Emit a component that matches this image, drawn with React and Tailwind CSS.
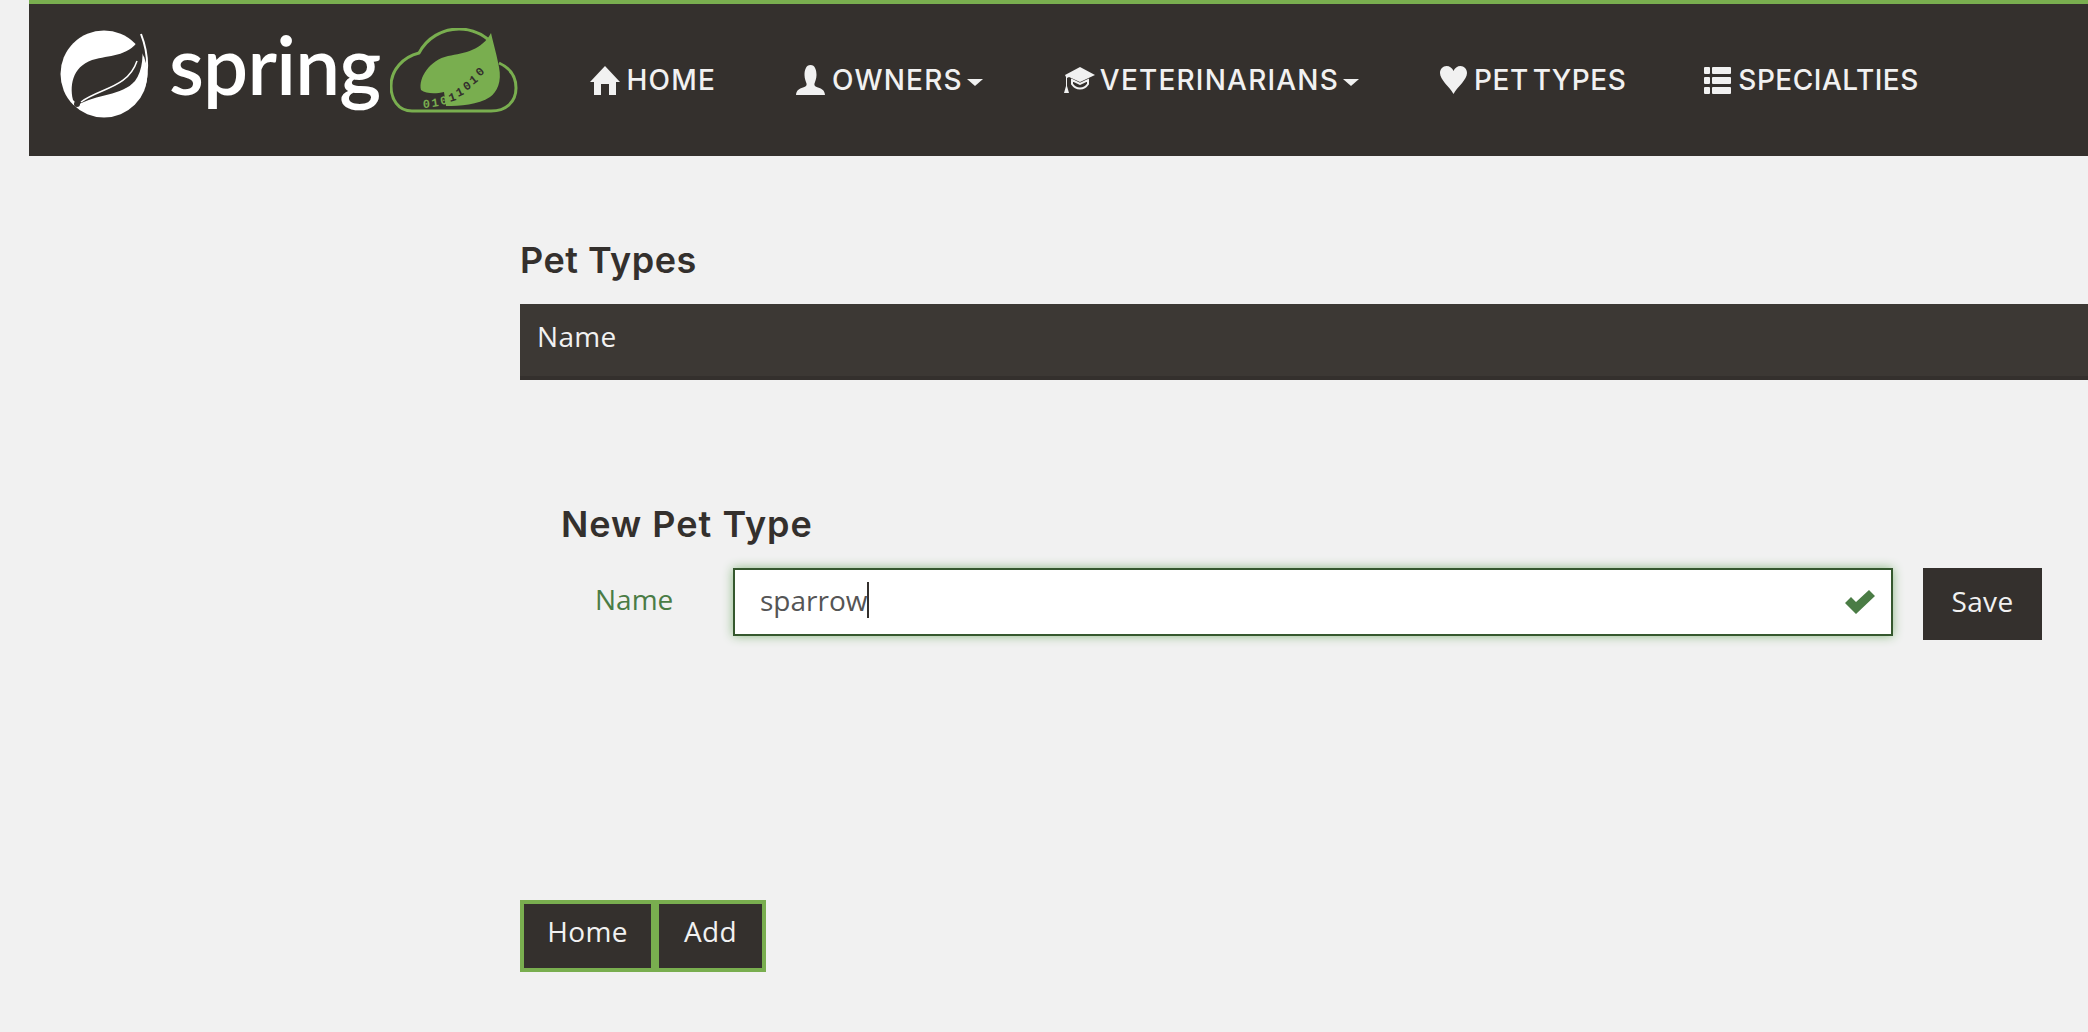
const heading = { fontFamily: '"Inter", "Liberation Sans", sans-serif' };
const body = { fontFamily: '"Open Sans", "Noto Sans", sans-serif' };

const digits = [
  ["0", 33, 80, -3, "#79ae4f"],
  ["1", 42, 79, -8, "#79ae4f"],
  ["0", 51, 77, -12, "#79ae4f"],
  ["1", 60, 74, -18, "#34302d"],
  ["1", 68, 69, -25, "#34302d"],
  ["0", 76, 63, -32, "#34302d"],
  ["1", 83, 57, -38, "#34302d"],
  ["0", 90, 49, -44, "#34302d"],
];

function SpringLeaf() {
  return (
    <svg width="90" height="90" viewBox="0 0 90 90" className="block shrink-0">
      <circle cx="44" cy="46" r="43.5" fill="#fff" />
      <path d="M13 72C9 55 14 36 36 31C52 27 70 28 81 9C84 26 83 42 75 53C62 68 36 66 18 77Z" fill="#34302d" />
      <path d="M21 74C40 60 68 60 77 33" fill="none" stroke="#fff" strokeWidth="1.5" />
      <path d="M81 6C88 24 89 42 84 60" fill="none" stroke="#fff" strokeWidth="2" />
      <circle cx="17" cy="76" r="3" fill="#34302d" />
    </svg>
  );
}

function Cloud() {
  return (
    <svg width="128" height="86" viewBox="0 0 128 86" className="block shrink-0">
      <path d="M22 83C8 83 1 71 1 58C1 42 13 29 29 25C37 10 52 1 69 1C83 1 94 7 102 15M109 35C120 40 126 49 126 60C126 74 116 83 101 83" fill="none" stroke="#79ae4f" strokeWidth="3" strokeLinejoin="round" />
      <path d="M22 83H101" stroke="#79ae4f" strokeWidth="3" />
      <path d="M101 5C104 18 107 28 109 39C112 54 107 64 100 69C88 77 70 78 56 78L54 64C46 66 36 66 31 62C28 50 40 32 58 28C75 25 92 22 101 5Z" fill="#79ae4f" />
      {digits.map(([d, x, y, r, c], i) => (
        <text key={i} x={x} y={y} transform={`rotate(${r} ${x} ${y})`} fontSize="12" fontFamily="Liberation Mono, monospace" fontWeight="700" fill={c}>{d}</text>
      ))}
    </svg>
  );
}

function HomeIcon() {
  return (
    <svg width="30" height="30" viewBox="0 0 30 30" className="shrink-0">
      <path d="M15 1L30 17H26V30H19V19H11V30H4V17H0Z" fill="#f1f1f1" />
    </svg>
  );
}
function UserIcon() {
  return (
    <svg width="29" height="30" viewBox="0 0 29 30" className="shrink-0">
      <path d="M14.5 0C19 0 20.5 5 20.5 10C20.5 14 19 16.5 18.5 18.5C18 20.5 19 21.5 22 22.5C26 24 28.5 25 29 30H0C.5 25 3 24 7 22.5C10 21.5 11 20.5 10.5 18.5C10 16.5 8.5 14 8.5 10C8.5 5 10 0 14.5 0Z" fill="#f1f1f1" />
    </svg>
  );
}
function CapIcon() {
  return (
    <svg width="31" height="28" viewBox="0 0 31 28" className="shrink-0">
      <path d="M16 1L31 9L16 16L5 11L3 12V20L5 27H0L2 20V11L1 9Z" fill="#f1f1f1" />
      <path d="M8 14L16 18L24 14V18C20 24 12 24 8 18Z" fill="none" stroke="#f1f1f1" strokeWidth="2" />
    </svg>
  );
}
function HeartIcon() {
  return (
    <svg width="27" height="28" viewBox="0 0 27 28" className="shrink-0">
      <path d="M13.5 28C9 20 0 14 0 7C0 3 3 0 6.5 0C9.5 0 12.5 2 13.5 5C14.5 2 17.5 0 20.5 0C24 0 27 3 27 7C27 14 18 20 13.5 28Z" fill="#f1f1f1" />
    </svg>
  );
}
function ListIcon() {
  return (
    <svg width="27" height="27" viewBox="0 0 27 27" className="shrink-0" fill="#f1f1f1">
      <rect x="0" y="0" width="6" height="7" rx="1" />
      <rect x="8" y="0" width="19" height="7" rx="1" />
      <rect x="0" y="10" width="6" height="7" rx="1" />
      <rect x="8" y="10" width="19" height="7" rx="1" />
      <rect x="0" y="20" width="6" height="7" rx="1" />
      <rect x="8" y="20" width="19" height="7" rx="1" />
    </svg>
  );
}
function Caret() {
  return <span className="ml-[4px] mt-[4px] h-0 w-0 border-x-[8px] border-t-[7px] border-x-transparent border-t-[#f1f1f1]" />;
}

function NavItem({ icon, label, caret, className = "", labelClass = "ml-[7px]" }) {
  return (
    <a className={`flex items-center text-[28px] font-medium uppercase text-[#f1f1f1] ${className}`} style={heading}>
      {icon}
      <span className={`${labelClass} whitespace-nowrap`}>{label}</span>
      {caret && <Caret />}
    </a>
  );
}

export default function App() {
  return (
    <div className="h-[1032px] w-[2088px] overflow-hidden bg-[#f1f1f1] text-[#34302d]">
      <nav className="ml-[29px] flex h-[156px] items-start border-t-4 border-[#79ae4f] bg-[#34302d]">
        <div className="ml-[31px] mt-[24px] flex items-start">
          <SpringLeaf />
          <span className="ml-[19px] mt-[-14px] text-[80px] font-semibold leading-[100px] tracking-[-0.8px] text-white" style={{ fontFamily: '"Lato", sans-serif' }}>spring</span>
          <div className="ml-[10px]">
            <Cloud />
          </div>
        </div>
        <div className="ml-[72px] mt-[55px] flex items-center">
          <NavItem icon={<HomeIcon />} label="Home" labelClass="ml-[6px]" className="tracking-[1.2px]" />
          <NavItem icon={<UserIcon />} label="Owners" caret className="ml-[80px] tracking-[1.2px]" />
          <NavItem icon={<CapIcon />} label="Veterinarians" caret labelClass="ml-[5px]" className="ml-[81px] tracking-[1.2px]" />
          <NavItem icon={<HeartIcon />} label="Pet Types" className="ml-[81px] tracking-[0.5px] [word-spacing:-4px]" />
          <NavItem icon={<ListIcon />} label="Specialties" className="ml-[78px] tracking-[0.5px]" />
        </div>
      </nav>

      <main className="ml-[520px]">
        <h2 className="mt-[81px] text-[36px] font-semibold leading-[46px] tracking-[0.5px]" style={heading}>Pet Types</h2>
        <div className="mt-[21px] flex h-[76px] items-center border-b-4 border-[#34302d] bg-[#3c3834] pb-[8px] pl-[17px] text-[28px] tracking-[0.3px] text-[#f1f1f1]" style={body}>
          Name
        </div>

        <section className="ml-[41px] mt-[121px]">
          <h2 className="text-[36px] font-semibold leading-[46px] tracking-[1px]" style={heading}>New Pet Type</h2>
          <div className="mt-[21px] flex items-start">
            <label className="-mt-[3px] ml-[34px] w-[138px] text-[28px] leading-[68px] text-[#4a7c45]" style={body}>Name</label>
            <div className="flex h-[68px] w-[1160px] items-center justify-between border-2 border-[#35582e] bg-white pl-[25px] pr-[16px] shadow-[0_0_10px_#8dbb85]">
              <span className="mb-[4px] border-r-2 border-[#34302d] text-[28px] leading-[36px] text-[#555]" style={body}>sparrow</span>
              <svg width="30" height="24" viewBox="0 0 30 24">
                <path d="M0 13L6 7L11 12L24 0L30 6L11 24Z" fill="#4a7c45" />
              </svg>
            </div>
            <button className="ml-[30px] h-[72px] w-[119px] bg-[#34302d] pb-[6px] text-[28px] tracking-[0.3px] text-[#f1f1f1]" style={body}>Save</button>
          </div>
        </section>

        <div className="mt-[260px] flex text-[28px] tracking-[0.3px] text-[#f1f1f1]" style={body}>
          <button className="h-[72px] w-[135px] border-4 border-[#79ae4f] bg-[#34302d] pb-[10px]">Home</button>
          <button className="h-[72px] w-[111px] border-4 border-[#79ae4f] bg-[#34302d] pb-[10px]">Add</button>
        </div>
      </main>
    </div>
  );
}
